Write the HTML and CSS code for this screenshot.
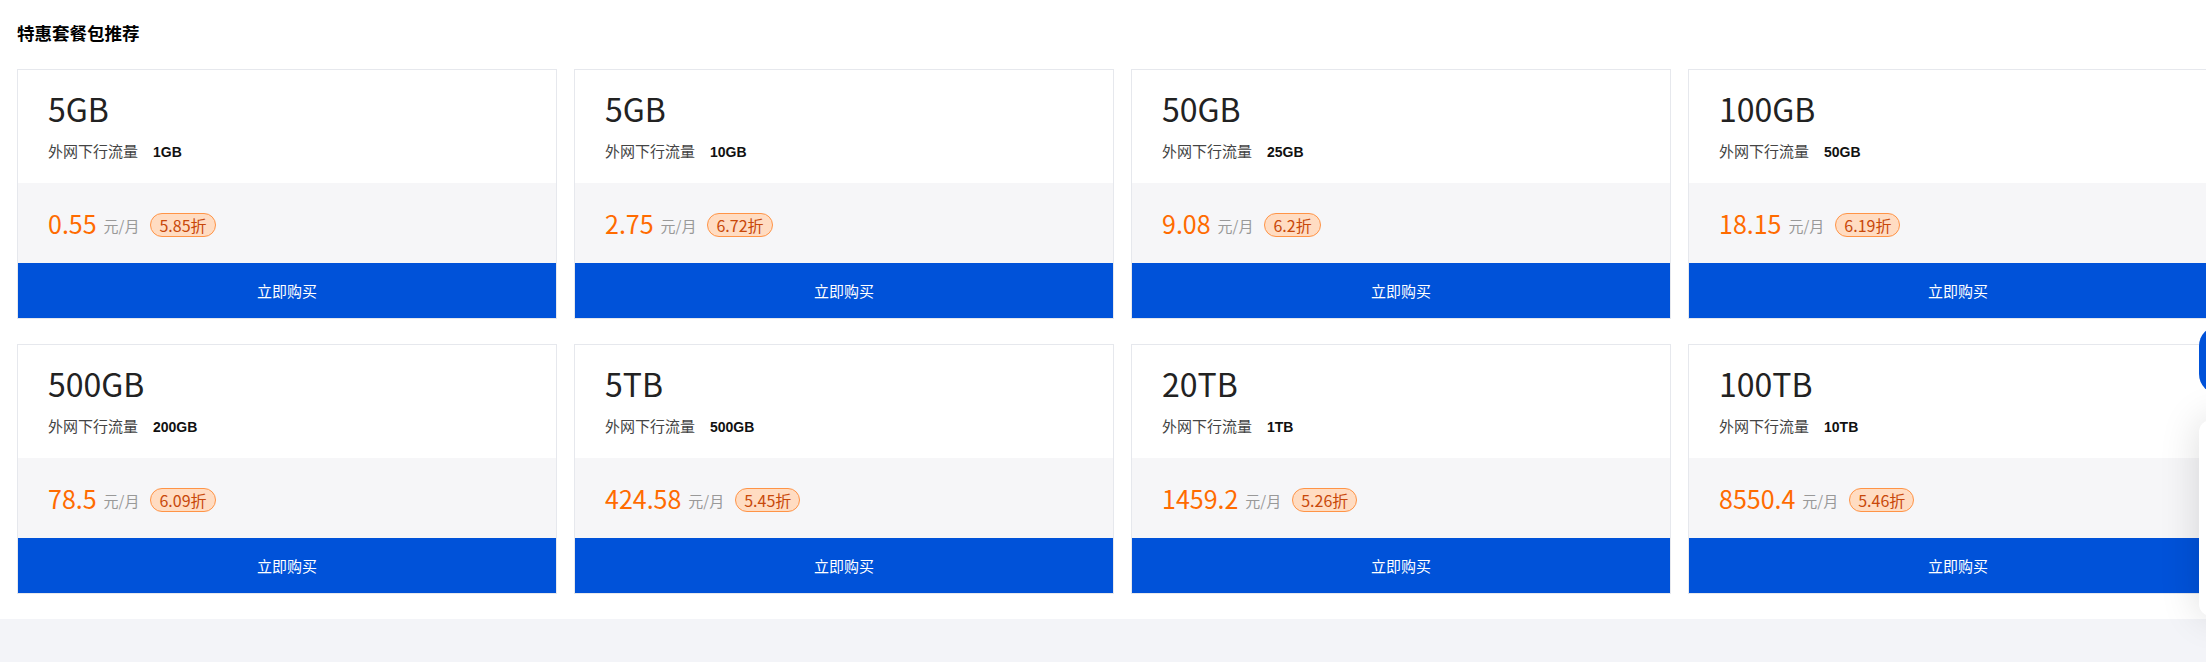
FILE: index.html
```html
<!DOCTYPE html>
<html lang="zh-CN">
  <head>
    <meta charset="utf-8" />
    <link rel="stylesheet" href="styles.css">
  </head>
  <body>

<div class="panel">
  <h2 class="panel-title">特惠套餐包推荐</h2>

  <div class="plans">

    <div class="plan">
      <div class="plan-head">
        <div class="plan-size">5GB</div>
        <div class="plan-spec"><span class="spec-label">外网下行流量</span><span class="spec-value">1GB</span></div>
      </div>
      <div class="plan-price"><span class="price">0.55</span><span class="unit">元/月</span><span class="discount">5.85折</span></div>
      <button class="buy">立即购买</button>
    </div>

    <div class="plan">
      <div class="plan-head">
        <div class="plan-size">5GB</div>
        <div class="plan-spec"><span class="spec-label">外网下行流量</span><span class="spec-value">10GB</span></div>
      </div>
      <div class="plan-price"><span class="price">2.75</span><span class="unit">元/月</span><span class="discount">6.72折</span></div>
      <button class="buy">立即购买</button>
    </div>

    <div class="plan">
      <div class="plan-head">
        <div class="plan-size">50GB</div>
        <div class="plan-spec"><span class="spec-label">外网下行流量</span><span class="spec-value">25GB</span></div>
      </div>
      <div class="plan-price"><span class="price">9.08</span><span class="unit">元/月</span><span class="discount">6.2折</span></div>
      <button class="buy">立即购买</button>
    </div>

    <div class="plan">
      <div class="plan-head">
        <div class="plan-size">100GB</div>
        <div class="plan-spec"><span class="spec-label">外网下行流量</span><span class="spec-value">50GB</span></div>
      </div>
      <div class="plan-price"><span class="price">18.15</span><span class="unit">元/月</span><span class="discount">6.19折</span></div>
      <button class="buy">立即购买</button>
    </div>

    <div class="plan">
      <div class="plan-head">
        <div class="plan-size">500GB</div>
        <div class="plan-spec"><span class="spec-label">外网下行流量</span><span class="spec-value">200GB</span></div>
      </div>
      <div class="plan-price"><span class="price">78.5</span><span class="unit">元/月</span><span class="discount">6.09折</span></div>
      <button class="buy">立即购买</button>
    </div>

    <div class="plan">
      <div class="plan-head">
        <div class="plan-size">5TB</div>
        <div class="plan-spec"><span class="spec-label">外网下行流量</span><span class="spec-value">500GB</span></div>
      </div>
      <div class="plan-price"><span class="price">424.58</span><span class="unit">元/月</span><span class="discount">5.45折</span></div>
      <button class="buy">立即购买</button>
    </div>

    <div class="plan">
      <div class="plan-head">
        <div class="plan-size">20TB</div>
        <div class="plan-spec"><span class="spec-label">外网下行流量</span><span class="spec-value">1TB</span></div>
      </div>
      <div class="plan-price"><span class="price">1459.2</span><span class="unit">元/月</span><span class="discount">5.26折</span></div>
      <button class="buy">立即购买</button>
    </div>

    <div class="plan">
      <div class="plan-head">
        <div class="plan-size">100TB</div>
        <div class="plan-spec"><span class="spec-label">外网下行流量</span><span class="spec-value">10TB</span></div>
      </div>
      <div class="plan-price"><span class="price">8550.4</span><span class="unit">元/月</span><span class="discount">5.46折</span></div>
      <button class="buy">立即购买</button>
    </div>

  </div>
</div>

<!-- floating side tools, cut off by the window edge -->
<div class="side-btn"></div>
<div class="side-box"></div>

  </body>
</html>
```

FILE: styles.css
```css
html{
	background-color: #f3f4f8;
}

body{
	margin: 0;
	overflow: hidden;
	font-family: "Noto Sans CJK SC", sans-serif;
	color: #222;
}

.panel{
	background-color: #fff;
	padding: 21px 0 25px 17px;
	box-shadow: 0 2px 5px rgba(0, 0, 0, 0.14);
}

.panel-title{
	margin: 0 0 24px 0;
	font-size: 17.5px;
	line-height: 24px;
	font-weight: bold;
	color: #000;
}

.plans{
	display: grid;
	grid-template-columns: repeat(4, 540px);
	gap: 25px 17px;
}

.plan{
	display: flex;
	flex-direction: column;
	border: 1px solid #e6e8ed;
}

.plan-head{
	height: 113px;
	box-sizing: border-box;
	padding: 18px 30px 0 30px;
}

.plan-size{
	font-size: 32px;
	line-height: 40px;
	color: #222;
}

.plan-spec{
	margin-top: 12px;
	line-height: 20px;
}

.spec-label{
	font-size: 15px;
	color: #444;
}

.spec-value{
	margin-left: 15px;
	font-family: "Liberation Sans", Arial, sans-serif;
	font-size: 14px;
	font-weight: bold;
	color: #111;
}

.plan-price{
	height: 80px;
	display: flex;
	align-items: center;
	padding: 0 30px;
	background-color: #f6f6f8;
}

.price{
	font-size: 25px;
	color: #ff6b00;
}

.unit{
	margin-left: 7px;
	margin-top: 5px;
	font-size: 15px;
	color: #999;
}

.discount{
	margin-left: 11px;
	margin-top: 3px;
	height: 22px;
	line-height: 22px;
	padding: 0 8px;
	border: 1px solid #ff9447;
	border-radius: 12px;
	background-color: #ffdcc2;
	color: #c8480a;
	font-size: 16px;
}

.buy{
	height: 55px;
	border: none;
	outline: none;
	background-color: #0052d9;
	color: #fff;
	font-family: "Noto Sans CJK SC", sans-serif;
	font-size: 15px;
	padding: 0;
}

.side-btn{
	position: fixed;
	left: 2199px;
	top: 326px;
	width: 48px;
	height: 68px;
	border-radius: 20px;
	background-color: #0052d9;
}

.side-box{
	position: fixed;
	left: 2199px;
	top: 420px;
	width: 48px;
	height: 196px;
	border-radius: 12px;
	background-color: #fff;
	box-shadow: 0 0 40px rgba(0, 0, 0, 0.14);
}
```
